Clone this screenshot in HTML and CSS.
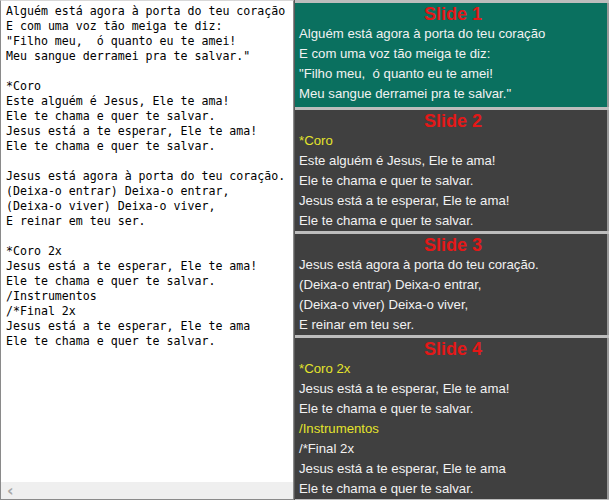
FILE: index.html
```html
<!DOCTYPE html>
<html lang="pt">
<head>
<meta charset="utf-8">
<title>Slides</title>
<link rel="stylesheet" href="styles.css">
</head>
<body>
<div class="app">
  <div class="editor">
    <pre class="code">Alguém está agora à porta do teu coração
E com uma voz tão meiga te diz:
"Filho meu,  ó quanto eu te amei!
Meu sangue derramei pra te salvar."

*Coro
Este alguém é Jesus, Ele te ama!
Ele te chama e quer te salvar.
Jesus está a te esperar, Ele te ama!
Ele te chama e quer te salvar.

Jesus está agora à porta do teu coração.
(Deixa-o entrar) Deixa-o entrar,
(Deixa-o viver) Deixa-o viver,
E reinar em teu ser.

*Coro 2x
Jesus está a te esperar, Ele te ama!
Ele te chama e quer te salvar.
/Instrumentos
/*Final 2x
Jesus está a te esperar, Ele te ama
Ele te chama e quer te salvar.</pre>
    <div class="hscroll"><span class="arrow">&#x2039;</span></div>
  </div>
  <div class="slides">
    <div class="slide active">
      <div class="title">Slide 1</div>
      <div class="line">Alguém está agora à porta do teu coração</div>
      <div class="line">E com uma voz tão meiga te diz:</div>
      <div class="line">"Filho meu,  ó quanto eu te amei!</div>
      <div class="line">Meu sangue derramei pra te salvar."</div>
    </div>
    <div class="slide">
      <div class="title">Slide 2</div>
      <div class="line tag">*Coro</div>
      <div class="line">Este alguém é Jesus, Ele te ama!</div>
      <div class="line">Ele te chama e quer te salvar.</div>
      <div class="line">Jesus está a te esperar, Ele te ama!</div>
      <div class="line">Ele te chama e quer te salvar.</div>
    </div>
    <div class="slide">
      <div class="title">Slide 3</div>
      <div class="line">Jesus está agora à porta do teu coração.</div>
      <div class="line">(Deixa-o entrar) Deixa-o entrar,</div>
      <div class="line">(Deixa-o viver) Deixa-o viver,</div>
      <div class="line">E reinar em teu ser.</div>
    </div>
    <div class="slide">
      <div class="title">Slide 4</div>
      <div class="line tag">*Coro 2x</div>
      <div class="line">Jesus está a te esperar, Ele te ama!</div>
      <div class="line">Ele te chama e quer te salvar.</div>
      <div class="line tag">/Instrumentos</div>
      <div class="line">/*Final 2x</div>
      <div class="line">Jesus está a te esperar, Ele te ama</div>
      <div class="line">Ele te chama e quer te salvar.</div>
    </div>
  </div>
</div>
</body>
</html>
```
FILE: styles.css
```css
html, body {
  margin: 0;
  padding: 0;
  background: #ffffff;
}

.app {
  display: flex;
  width: 609px;
  height: 500px;
  overflow: hidden;
}

.editor {
  width: 294px;
  flex: none;
  box-sizing: border-box;
  border: 1px solid #8a8a8a;
  border-top-color: #d8d8d8;
  background: #ffffff;
  display: flex;
  flex-direction: column;
}

.code {
  flex: 1;
  margin: 0;
  padding: 3px 0 0 5px;
  font-family: "DejaVu Sans Mono", "Liberation Mono", monospace;
  font-size: 11.6px;
  line-height: 15px;
  color: #000000;
  white-space: pre;
  overflow: hidden;
}

.hscroll {
  height: 17px;
  background: #efefef;
  display: flex;
  align-items: center;
  padding-left: 6px;
}

.arrow {
  font-family: "DejaVu Sans", sans-serif;
  font-size: 16px;
  font-weight: bold;
  color: #a8a8a8;
  line-height: 17px;
}

.slides {
  flex: 1;
  display: flex;
  flex-direction: column;
  gap: 3px;
  padding-top: 3px;
  background: #bdbdbd;
  border-left: 1px solid #5a5a5a;
  overflow: hidden;
}

.slide {
  flex: none;
  background: #404040;
  padding: 2px 0 0 4px;
  font-family: "Liberation Sans", Arial, sans-serif;
  border-right: 2px solid #9a9a9a;
}

.slide.active {
  background: #0a705f;
  padding-bottom: 3px;
}

.title {
  text-align: center;
  color: #e31818;
  font-weight: bold;
  font-size: 18px;
  line-height: 19px;
}

.line {
  font-size: 13.2px;
  line-height: 20px;
  color: #f2f2f2;
  white-space: pre;
}

.line.tag {
  color: #e4e42c;
}
```
